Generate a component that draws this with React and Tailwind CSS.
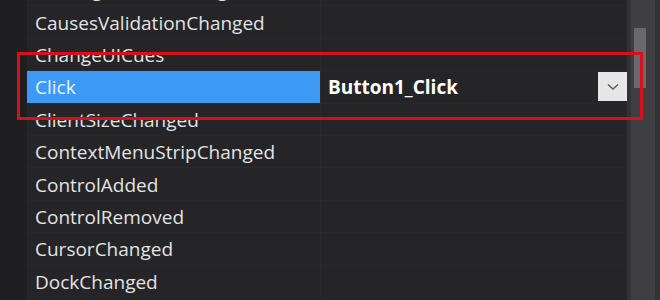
import React from "react";

const rows = [
  "BindingContextChanged",
  "CausesValidationChanged",
  "ChangeUICues",
  "Click",
  "ClientSizeChanged",
  "ContextMenuStripChanged",
  "ControlAdded",
  "ControlRemoved",
  "CursorChanged",
  "DockChanged",
];

export default function App() {
  return (
    <div
      className="relative w-[660px] h-[300px] overflow-hidden bg-[#252528] flex"
      style={{ fontFamily: '"Open Sans", "Noto Sans", sans-serif' }}
    >
      <div className="w-[27px] bg-[#1f1f22] shrink-0" />
      <div className="w-[600px] shrink-0 flex flex-col mt-[-26px]">
        {rows.map((name) => {
          const sel = name === "Click";
          return (
            <div key={name} className="flex h-[32.4px] shrink-0 border-b border-[#29292d]">
              <div
                className={
                  "w-[293px] shrink-0 flex items-center pl-[8px] pt-[2px] text-[19px] leading-none " +
                  (sel ? "bg-[#3d9af4] text-[#e6f2ff]" : "text-[#e2e2e2]")
                }
              >
                {name}
              </div>
              <div className="flex-1 flex items-center border-l border-[#29292d] pl-[7px]">
                {sel && (
                  <>
                    <span className="flex-1 text-[19px] leading-none pt-[2px] font-bold text-white">Button1_Click</span>
                    <div className="w-[29px] h-[29px] bg-[#e6e6e6] flex items-center justify-center">
                      <svg width="12" height="8" viewBox="0 0 12 8">
                        <path d="M1 1.5 L6 6 L11 1.5" fill="none" stroke="#5a5a5a" strokeWidth="1.4" />
                      </svg>
                    </div>
                  </>
                )}
              </div>
            </div>
          );
        })}
      </div>
      <div className="w-[28px] shrink-0 bg-[#3e3e43] border-l-[4px] border-[#333337] flex justify-center pt-[28px]">
        <div className="w-[12px] h-[60px] bg-[#6a6a6e] ml-[-6px]" />
      </div>
      <div className="w-[5px] shrink-0 bg-[#333337]" />
      <div className="absolute left-[17px] top-[52px] w-[626px] h-[68px] border-[3px] border-[#d8101c]" />
    </div>
  );
}
